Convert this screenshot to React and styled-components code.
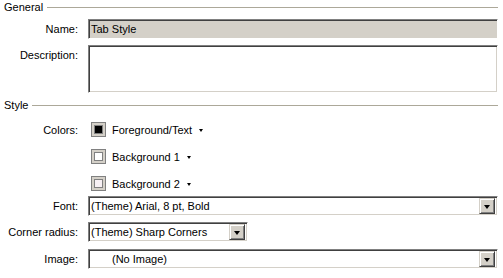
import React from 'react'
import styled, { createGlobalStyle } from 'styled-components'

const Global = createGlobalStyle`
  body {
    margin: 0;
    background: #ffffff;
    font-family: "Liberation Sans", Arial, sans-serif;
    font-size: 11px;
    color: #000;
  }
`

const Page = styled.div`
  width: 503px;
  height: 278px;
  overflow: hidden;
  display: flex;
  flex-direction: column;
`

const SectionHead = styled.div`
  display: flex;
  align-items: center;
  height: 14px;
  margin-top: ${p => p.$top || 0}px;
  padding-left: 4px;
  padding-right: 5px;
  & span { line-height: 14px; }
  &::after {
    content: "";
    flex: 1;
    height: 1px;
    background: #aca899;
    margin-left: 4px;
  }
`

const Row = styled.div`
  display: grid;
  grid-template-columns: 78px 1fr;
  column-gap: 10px;
  align-items: ${p => p.$top ? 'start' : 'center'};
  margin-top: ${p => p.$mt || 0}px;
  padding-right: 5px;
`

const Label = styled.label`
  text-align: right;
  line-height: 14px;
  padding-top: ${p => p.$pt || 0}px;
  white-space: nowrap;
`

const Field = styled.div`
  box-sizing: border-box;
  height: ${p => p.$h || 20}px;
  width: ${p => p.$w ? p.$w + 'px' : '100%'};
  background: ${p => p.$grey ? '#d4d0c8' : '#ffffff'};
  border: 1px solid;
  border-color: #808080 #ffffff #ffffff #808080;
  box-shadow: inset 1px 1px 0 #404040, inset -1px -1px 0 #d4d0c8;
  display: flex;
  align-items: ${p => p.$h ? 'flex-start' : 'center'};
  padding: 0 2px 0 ${p => p.$indent || 2}px;
  & span { flex: 1; line-height: 14px; white-space: nowrap; }
`

const DropButton = styled.div`
  box-sizing: border-box;
  width: 16px;
  height: 16px;
  background: #d4d0c8;
  border: 1px solid;
  border-color: #d4d0c8 #404040 #404040 #d4d0c8;
  box-shadow: inset 1px 1px 0 #ffffff, inset -1px -1px 0 #808080;
  display: flex;
  align-items: center;
  justify-content: center;
  &::after {
    content: "";
    width: 0;
    height: 0;
    border-left: 3.5px solid transparent;
    border-right: 3.5px solid transparent;
    border-top: 4px solid #000;
    margin-top: 1px;
  }
`

const ColorPick = styled.div`
  display: flex;
  align-items: center;
  height: 21px;
  padding-left: 3px;
`

const Swatch = styled.div`
  box-sizing: border-box;
  width: 15px;
  height: 15px;
  border: 1px solid #808080;
  background: #d4d0c8;
  padding: 2px;
  & div {
    box-sizing: border-box;
    width: 100%;
    height: 100%;
    border: 1px solid #808080;
    background: ${p => p.$fill};
  }
`

const ColorName = styled.span`
  margin-left: 6px;
  line-height: 14px;
`

const MiniArrow = styled.span`
  width: 0;
  height: 0;
  border-left: 2.5px solid transparent;
  border-right: 2.5px solid transparent;
  border-top: 3px solid #000;
  margin-left: 7px;
  margin-top: 1px;
`

const colors = [
  { name: 'Foreground/Text', fill: '#000000', mt: 7 },
  { name: 'Background 1', fill: '#ffffff', mt: 6 },
  { name: 'Background 2', fill: '#f7f0f4', mt: 6 },
]

export default function App() {
  return (
    <Page>
      <Global />
      <SectionHead $top={0}><span>General</span></SectionHead>
      <Row $mt={5}>
        <Label>Name:</Label>
        <Field $grey><span>Tab Style</span></Field>
      </Row>
      <Row $mt={6} $top>
        <Label $pt={3}>Description:</Label>
        <Field $h={48} />
      </Row>
      <SectionHead $top={5}><span>Style</span></SectionHead>
      {colors.map((c, i) => (
        <Row key={c.name} $mt={c.mt}>
          <Label>{i === 0 ? 'Colors:' : ''}</Label>
          <ColorPick>
            <Swatch $fill={c.fill}><div /></Swatch>
            <ColorName>{c.name}</ColorName>
            <MiniArrow />
          </ColorPick>
        </Row>
      ))}
      <Row $mt={2}>
        <Label>Font:</Label>
        <Field><span>(Theme) Arial, 8 pt, Bold</span><DropButton /></Field>
      </Row>
      <Row $mt={6}>
        <Label>Corner radius:</Label>
        <Field $w={160}><span>(Theme) Sharp Corners</span><DropButton /></Field>
      </Row>
      <Row $mt={7}>
        <Label>Image:</Label>
        <Field $indent={23}><span>(No Image)</span><DropButton /></Field>
      </Row>
    </Page>
  )
}
